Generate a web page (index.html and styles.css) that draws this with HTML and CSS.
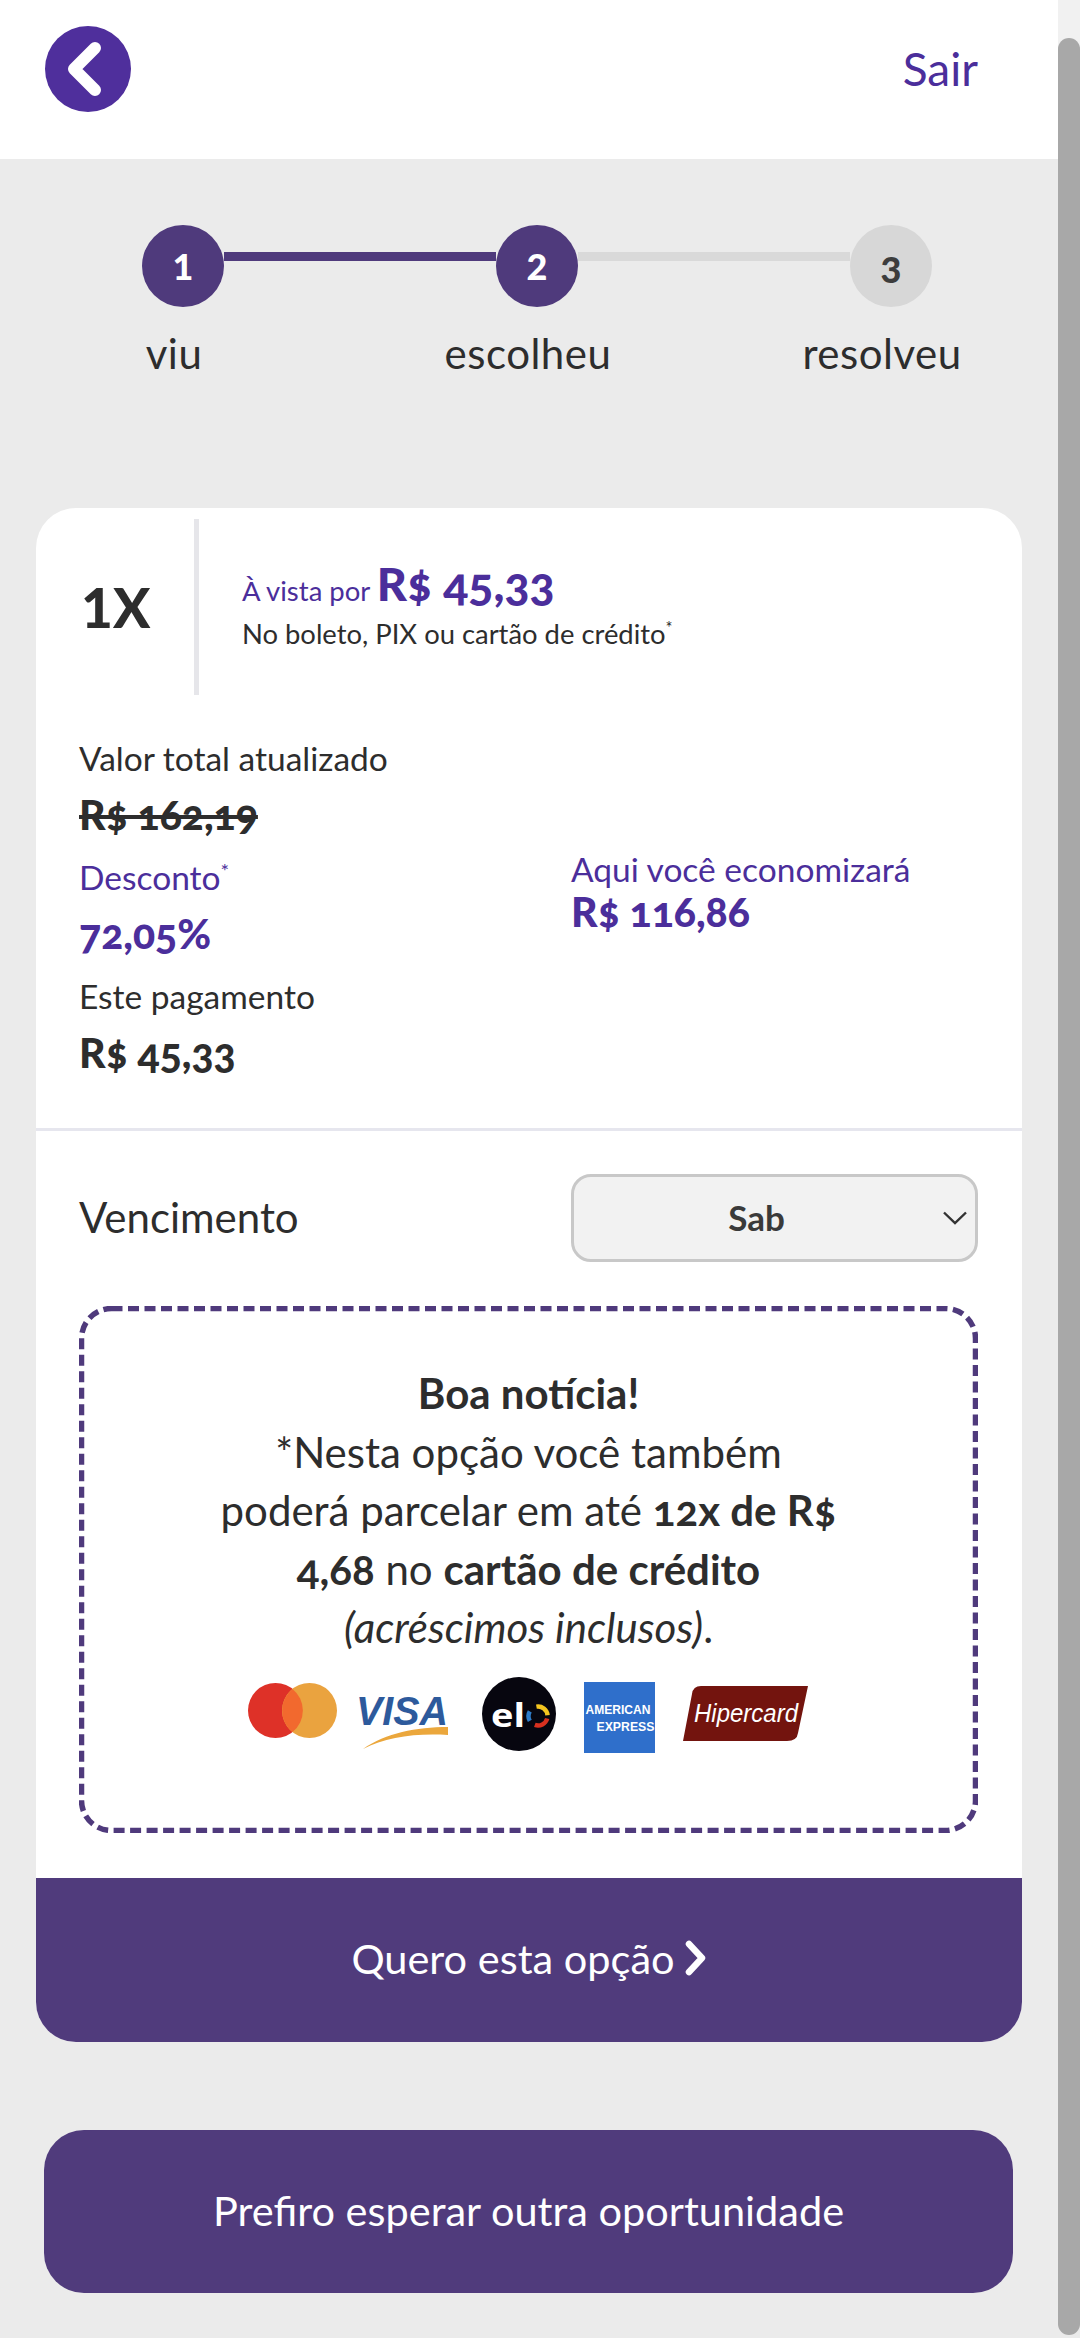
FILE: index.html
```html
<!DOCTYPE html>
<html lang="pt-BR">
<head>
    <meta charset="UTF-8">
    <meta name="viewport" content="width=device-width, initial-scale=1.0">
    <title>Quero esta opção</title>
    <link rel="stylesheet" href="styles.css">
</head>
<body>
    <div class="page">
        <header class="topbar">
            <a class="back" href="#" aria-label="Voltar">
                <svg width="86" height="86" viewBox="0 0 86 86">
                    <circle cx="43" cy="43" r="43" fill="#4f2f9c"/>
                    <path d="M50 22 L29 43 L50 64" fill="none" stroke="#fff" stroke-width="12" stroke-linecap="round" stroke-linejoin="round"/>
                </svg>
            </a>
            <a class="logout" href="#">Sair</a>
        </header>

        <section class="steps">
            <div class="track">
                <span class="dot">1</span>
                <span class="bar"></span>
                <span class="dot">2</span>
                <span class="bar bar-off"></span>
                <span class="dot dot-off">3</span>
            </div>
            <div class="labels">
                <span>viu</span>
                <span>escolheu</span>
                <span>resolveu</span>
            </div>
        </section>

        <section class="card">
            <div class="plan">
                <div class="times">1X</div>
                <div class="plan-info">
                    <p class="plan-price">À vista por <strong>R$ 45,33</strong></p>
                    <p class="plan-note">No boleto, PIX ou cartão de crédito<sup>*</sup></p>
                </div>
            </div>

            <div class="values">
                <div class="col">
                    <p class="label">Valor total atualizado</p>
                    <p class="amount"><s>R$ 162,19</s></p>
                    <p class="label purple">Desconto<sup>*</sup></p>
                    <p class="amount purple">72,05%</p>
                    <p class="label">Este pagamento</p>
                    <p class="amount">R$ 45,33</p>
                </div>
                <div class="col col-save">
                    <p class="label purple">Aqui você economizará</p>
                    <p class="amount purple">R$ 116,86</p>
                </div>
            </div>

            <div class="due">
                <span class="due-label">Vencimento</span>
                <div class="select">
                    <span>Sab</span>
                    <svg class="select-arrow" width="24" height="14" viewBox="0 0 24 14">
                        <path d="M1 1.5 L12 12 L23 1.5" fill="none" stroke="#333" stroke-width="2.4"/>
                    </svg>
                </div>
            </div>

            <div class="notice">
                <svg class="notice-border" width="100%" height="100%">
                    <rect x="2.5" y="2.5" width="894" height="522" rx="30" ry="30" fill="none" stroke="#4f3a7c" stroke-width="5.5" stroke-dasharray="11 5.5"/>
                </svg>
                <p class="notice-text">
                    <strong>Boa notícia!</strong><br>
                    *Nesta opção você também<br>
                    poderá parcelar em até <strong>12x de R$</strong><br>
                    <strong>4,68</strong> no <strong>cartão de crédito</strong><br>
                    <em>(acréscimos inclusos)</em>.
                </p>
                <div class="brands">
                    <svg width="89" height="76" viewBox="0 0 89 76">
                        <circle cx="27.5" cy="33.5" r="27.5" fill="#de3128"/>
                        <circle cx="61.5" cy="33.5" r="27.5" fill="#eaa33f"/>
                        <path d="M44.5 12 A27.5 27.5 0 0 1 44.5 55 A27.5 27.5 0 0 1 44.5 12 Z" fill="#f2692e"/>
                    </svg>
                    <svg class="brand-visa" width="98" height="76" viewBox="0 0 98 76">
                        <text x="0" y="48" class="visa-text" textLength="92" lengthAdjust="spacingAndGlyphs">VISA</text>
                        <path d="M7 72 C30 56 60 50 92 50 L92 58 C60 56 30 60 7 72 Z" fill="#eba73c"/>
                    </svg>
                    <svg width="74" height="76" viewBox="0 0 74 76">
                        <circle cx="37" cy="37" r="37" fill="#07060f"/>
                        <text x="9" y="50" class="elo-text" textLength="34" lengthAdjust="spacingAndGlyphs">el</text>
                        <path d="M54.4 29.600 A9.500 9.500 0 0 1 65.500 38.200" fill="none" stroke="#f4c51f" stroke-width="4.500"/>
                        <path d="M65.200 41.500 A9.500 9.500 0 0 1 52.800 47.900" fill="none" stroke="#d8301f" stroke-width="4.500"/>
                        <path d="M47.800 43.800 A9.500 9.500 0 0 1 47.800 34.300" fill="none" stroke="#2f7cc8" stroke-width="4.500"/>
                    </svg>
                    <svg width="71" height="76" viewBox="0 0 71 76">
                        <rect x="0" y="5" width="71" height="71" fill="#2f6fcb"/>
                        <text x="1.500" y="37" class="amex-text" textLength="65" lengthAdjust="spacingAndGlyphs">AMERICAN</text>
                        <text x="12.500" y="54" class="amex-text" textLength="58" lengthAdjust="spacingAndGlyphs">EXPRESS</text>
                    </svg>
                    <svg width="126" height="76" viewBox="0 0 126 76">
                        <path d="M15 9 H125 L115 56 Q114 64 104 64 H0 L9 17 Q10 9 18 9 Z" fill="#73140e"/>
                        <text x="11" y="45" class="hiper-text" textLength="104" lengthAdjust="spacingAndGlyphs">Hipercard</text>
                    </svg>
                </div>
            </div>

            <a class="choose" href="#">
                Quero esta opção
                <svg width="22" height="36" viewBox="0 0 22 36">
                    <path d="M4 4 L17 18 L4 32" fill="none" stroke="#fff" stroke-width="6.500" stroke-linecap="round" stroke-linejoin="round"/>
                </svg>
            </a>
        </section>

        <a class="wait" href="#">Prefiro esperar outra oportunidade</a>
    </div>

    <div class="scrollbar">
        <div class="thumb"></div>
    </div>
</body>
</html>
```

FILE: styles.css
```css
* {
    box-sizing: border-box;
}
html, body {
    margin: 0;
    height: 2338px;
    overflow: hidden;
}
body {
    display: flex;
    background-color: #ebebeb;
    color: #2d2d2d;
    font-family: Lato, "Open Sans", sans-serif;
    font-variant-numeric: oldstyle-nums;
}
p {
    margin: 0;
}
a {
    text-decoration: none;
}
sup {
    font-size: 0.6em;
    line-height: 0;
}
.page {
    width: 1058px;
    flex: none;
}

/* topo */
.topbar {
    height: 159px;
    background-color: #fff;
    padding: 26px 80px 0 45px;
    display: flex;
    justify-content: space-between;
    align-items: flex-start;
}
.back {
    display: block;
    height: 86px;
}
.logout {
    color: #4b2e9b;
    font-size: 46px;
    line-height: 86px;
}

/* passos */
.steps {
    padding-top: 66px;
}
.track {
    display: flex;
    margin-left: 142px;
}
.dot {
    width: 82px;
    height: 82px;
    flex: none;
    border-radius: 50%;
    background-color: #4f3a7c;
    color: #fff;
    font-size: 36px;
    font-weight: 900;
    display: flex;
    align-items: center;
    justify-content: center;
    font-variant-numeric: lining-nums;
}
.dot-off {
    background-color: #d7d7d7;
    color: #3d3d3d;
    padding-top: 6px;
}
.bar {
    width: 272px;
    height: 9px;
    margin-top: 27px;
    background-color: #4f3a7c;
}
.bar-off {
    background-color: #d9d9d9;
}
.labels {
    display: grid;
    grid-template-columns: 348px 348px 348px;
    gap: 6px;
    margin-top: 23px;
    font-size: 42px;
    letter-spacing: 0.5px;
    line-height: 46px;
    text-align: center;
}

/* cartao */
.card {
    width: 986px;
    margin: 132px 0 0 36px;
    padding-top: 11px;
    background-color: #fff;
    border-radius: 40px;
    overflow: hidden;
}
.plan {
    display: flex;
    align-items: center;
    height: 176px;
}
.times {
    width: 163px;
    height: 176px;
    padding-left: 45px;
    border-right: 5px solid #e6e6ea;
    font-size: 55px;
    font-weight: 900;
    line-height: 176px;
    font-variant-numeric: lining-nums;
}
.plan-info {
    padding-left: 43px;
    margin-top: -4px;
}
.plan-price {
    color: #4b2e9b;
    font-size: 27.500px;
    line-height: 50px;
}
.plan-price strong {
    font-size: 46.500px;
    font-weight: 900;
}
.plan-note {
    font-size: 27.400px;
    line-height: 36px;
}
.values {
    display: flex;
    padding: 34px 0 0 43px;
    height: 436px;
    border-bottom: 3px solid #e6e6ee;
}
.col {
    width: 492px;
    flex: none;
}
.label {
    font-size: 33.500px;
    line-height: 59.500px;
}
.amount {
    font-size: 41px;
    font-weight: 900;
    line-height: 51.500px;
    padding-bottom: 8px;
}
.purple {
    color: #4b2e9b;
}
.col-save {
    padding-top: 120px;
}
.col-save .label {
    line-height: 40px;
}
.col-save .amount {
    line-height: 46px;
    padding-bottom: 0;
}
.due {
    display: flex;
    justify-content: space-between;
    align-items: center;
    margin: 43px 44px 0 43px;
}
.due-label {
    font-size: 42px;
    padding-bottom: 2px;
}
.select {
    position: relative;
    width: 407px;
    height: 88px;
    padding: 0 36px 2px 0;
    background-color: #f2f2f2;
    border: 3px solid #c8c8c8;
    border-radius: 20px;
    font-size: 35px;
    font-weight: 700;
    color: #3a3a3a;
    display: flex;
    align-items: center;
    justify-content: center;
}
.select-arrow {
    position: absolute;
    right: 8px;
    top: 34px;
}

/* caixa tracejada */
.notice {
    position: relative;
    width: 899px;
    height: 527px;
    margin: 44px 0 45px 43px;
    padding-top: 58px;
}
.notice-border {
    position: absolute;
    left: 0;
    top: 0;
}
.notice-text {
    font-size: 42px;
    line-height: 58.600px;
    text-align: center;
}
.brands {
    display: flex;
    justify-content: center;
    gap: 28px;
    margin-top: 20px;
}
.brand-visa {
    margin-left: -9px;
}
.visa-text {
    font-family: "Liberation Sans", sans-serif;
    font-size: 40px;
    font-weight: 700;
    font-style: italic;
    fill: #2d5a9c;
}
.elo-text {
    font-family: "Open Sans", sans-serif;
    font-size: 33px;
    font-weight: 700;
    fill: #fff;
}
.amex-text {
    font-family: "Liberation Sans", sans-serif;
    font-size: 12px;
    font-weight: 700;
    fill: #fff;
}
.hiper-text {
    font-family: "Liberation Sans", sans-serif;
    font-size: 25.500px;
    font-style: italic;
    fill: #fff;
}

/* botoes */
.choose,
.wait {
    display: flex;
    align-items: center;
    justify-content: center;
    padding-bottom: 4px;
    background-color: #503b7c;
    color: #fff;
    font-size: 41.500px;
}
.choose {
    height: 164px;
    gap: 10px;
}
.wait {
    width: 969px;
    height: 163px;
    margin: 88px 0 0 44px;
    border-radius: 40px;
}

/* barra de rolagem */
.scrollbar {
    width: 22px;
    flex: none;
    height: 2338px;
    padding-top: 38px;
    background: linear-gradient(#f1f1f1 159px, #ebebeb 159px);
}
.thumb {
    height: 2297px;
    background-color: #a8a8a8;
    border-radius: 11px;
}
```
